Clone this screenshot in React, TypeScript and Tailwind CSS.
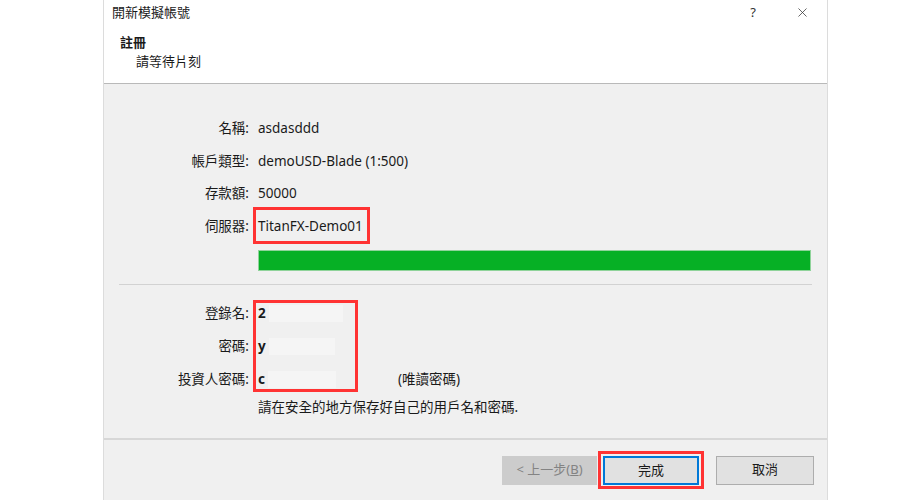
import { X } from "lucide-react";

const infoRows = [
  { label: "名稱:", value: "asdasddd" },
  { label: "帳戶類型:", value: "demoUSD-Blade (1:500)" },
  { label: "存款額:", value: "50000" },
];

const loginRows = [
  { label: "登錄名:", first: "2", blur: "w-[74px]" },
  { label: "密碼:", first: "y", blur: "w-[66px]" },
  { label: "投資人密碼:", first: "c", blur: "w-[68px]" },
];

export default function App() {
  return (
    <div className="flex h-[500px] w-[900px] overflow-hidden bg-white font-['Noto_Sans','Noto_Sans_CJK_TC',sans-serif] text-[13.5px] text-[#1a1a1a]">
      {/* dialog */}
      <div className="ml-[103px] flex w-[725px] flex-col border-l border-r border-[#dcdcdc]">
        {/* HEADER */}
        <div className="h-[84px] shrink-0 border-b border-[#b9b9b9] bg-white">
          <div className="flex h-[24px] items-center pl-[8px] pr-[17px]">
            <span className="text-[13px] leading-none">開新模擬帳號</span>
            <span className="ml-auto mr-[39px] text-[13px] leading-none text-[#333]">?</span>
            <X className="h-[15px] w-[15px] text-[#333]" strokeWidth={1.2} />
          </div>
          <div className="pl-[16px] pt-[9px] text-[13px] font-bold leading-[19px]">註冊</div>
          <div className="pl-[32px] text-[13px] leading-[19px]">請等待片刻</div>
        </div>

        {/* BODY */}
        <div className="flex-1 bg-[#f0f0f0] pt-[28px]">
          {infoRows.map((r) => (
            <div key={r.label} className="flex h-[32.5px] items-center">
              <div className="w-[145px] text-right">{r.label}</div>
              <div className="ml-[9px]">{r.value}</div>
            </div>
          ))}
          <div className="flex h-[32.5px] items-center">
            <div className="w-[145px] text-right">伺服器:</div>
            <div className="ml-[4px] flex h-[37px] items-center border-[3px] border-[#ff3333] pl-[2px] pr-[4px]">
              TitanFX-Demo01
            </div>
          </div>

          {/* progress */}
          <div className="ml-[154px] mt-[8px] h-[21px] w-[553px] border border-[#8fd39a] bg-[#06b025]" />

          <div className="ml-[15px] mt-[13px] h-[2px] w-[693px] border-t border-[#d2d2d2] border-b-white" />

          <div className="relative pt-[11px]">
            {loginRows.map((r, i) => (
              <div key={r.label} className="flex h-[33px] items-center">
                <div className="w-[145px] text-right">{r.label}</div>
                <div className="ml-[9px] flex w-[140px] items-center">
                  <span className="font-bold">{r.first}</span>
                  <span className={`ml-[3px] h-[17px] ${r.blur} bg-[#f5f5f5]`} />
                </div>
                {i === 2 && <span>(唯讀密碼)</span>}
              </div>
            ))}
            <div className="absolute left-[149px] top-[14px] h-[92px] w-[105px] border-[3px] border-[#ff3333]" />
          </div>
          <div className="ml-[154px] flex h-[22px] items-center">請在安全的地方保存好自己的用戶名和密碼.</div>
        </div>

        {/* FOOTER */}
        <div className="flex h-[62px] shrink-0 items-center justify-end border-t-2 border-[#d7d7d7] bg-[#f0f0f0] pr-[13px]">
          <button className="h-[29px] w-[95px] bg-[#cccccc] text-[13px] text-[#838383]">
            &lt; 上一步(<span className="underline">B</span>)
          </button>
          <div className="ml-[1px] border-[3px] border-[#ff3333] px-[2px] pb-[1px] pt-[2px]">
            <button className="h-[29px] w-[96px] border-2 border-[#0078d7] bg-[#e1e1e1] text-[13px]">完成</button>
          </div>
          <button className="ml-[12px] h-[29px] w-[98px] border border-[#adadad] bg-[#e1e1e1] text-[13px]">取消</button>
        </div>
      </div>
    </div>
  );
}
